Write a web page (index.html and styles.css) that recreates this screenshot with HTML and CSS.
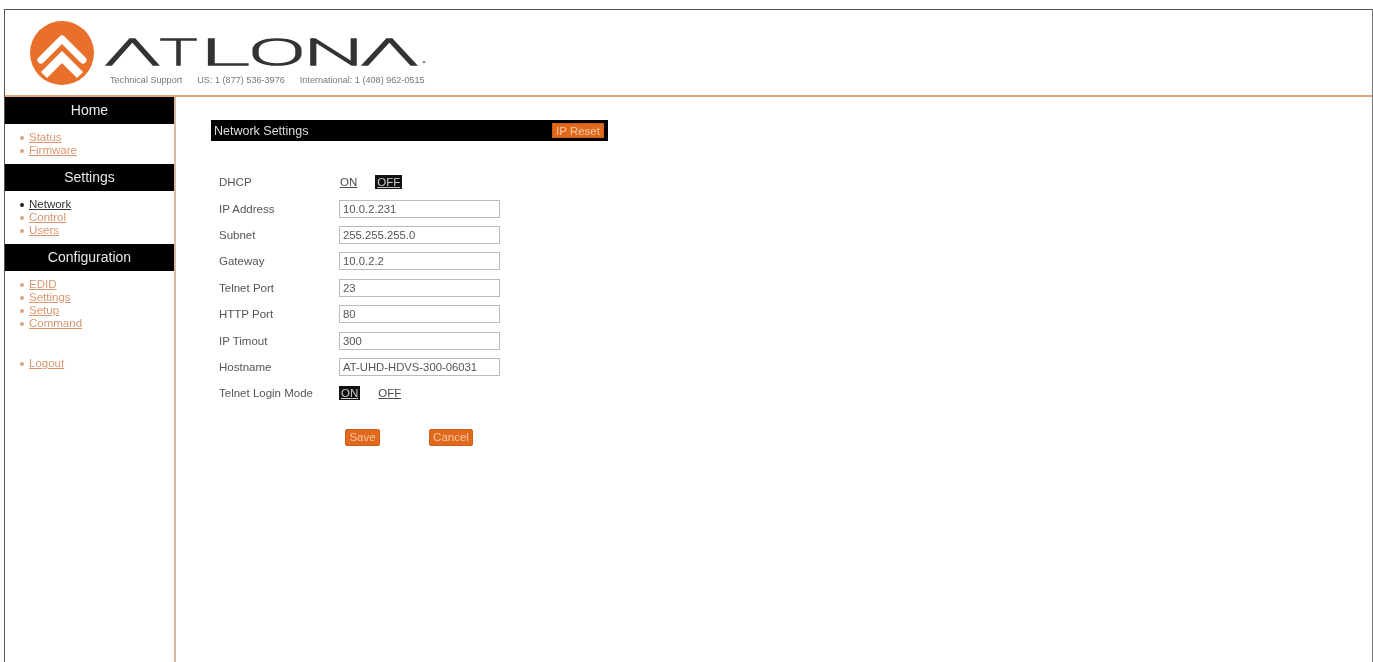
FILE: index.html
```html
<!DOCTYPE html>
<html lang="en">
<head>
    <meta charset="UTF-8">
    <meta name="viewport" content="width=device-width, initial-scale=1.0">
    <title>Network Settings</title>
    <link rel="stylesheet" href="styles.css">
</head>
<body>

    <div class="frame">
        <div class="header">
            <svg class="emblem" width="64" height="64" viewBox="0 0 64 64">
                <circle cx="32" cy="32" r="32" fill="#e8702a"/>
                <path d="M11 39 L32 18 L53 39" fill="none" stroke="#fff" stroke-width="7" stroke-linecap="round" stroke-linejoin="round"/>
                <path d="M14 54 L32 36 L50 54" fill="none" stroke="#fff" stroke-width="8.5" stroke-linejoin="miter"/>
            </svg>
            <div class="brand">
                <svg class="wordmark" width="327" height="52" viewBox="0 0 327 52" role="img" aria-label="ATLONA">
                    <text class="wordmark-text" y="42"><tspan x="0" textLength="57" lengthAdjust="spacingAndGlyphs">Λ</tspan><tspan x="56" textLength="37" lengthAdjust="spacingAndGlyphs">T</tspan><tspan x="97" textLength="48" lengthAdjust="spacingAndGlyphs">L</tspan><tspan x="145" textLength="56" lengthAdjust="spacingAndGlyphs">O</tspan><tspan x="200" textLength="59" lengthAdjust="spacingAndGlyphs">N</tspan><tspan x="256" textLength="59" lengthAdjust="spacingAndGlyphs">Λ</tspan></text>
                    <circle cx="320" cy="39" r="1.3" fill="#888"/>
                </svg>
                <div class="support">
                    <span>Technical Support</span>
                    <span>US: 1 (877) 536-3976</span>
                    <span>International: 1 (408) 962-0515</span>
                </div>
            </div>
        </div>

        <div class="main">
            <div class="sidebar">
                <div class="side-title">Home</div>
                <ul class="side-list">
                    <li><a href="#">Status</a></li>
                    <li><a href="#">Firmware</a></li>
                </ul>
                <div class="side-title">Settings</div>
                <ul class="side-list">
                    <li class="current"><a href="#">Network</a></li>
                    <li><a href="#">Control</a></li>
                    <li><a href="#">Users</a></li>
                </ul>
                <div class="side-title">Configuration</div>
                <ul class="side-list">
                    <li><a href="#">EDID</a></li>
                    <li><a href="#">Settings</a></li>
                    <li><a href="#">Setup</a></li>
                    <li><a href="#">Command</a></li>
                </ul>
                <ul class="side-list logout">
                    <li><a href="#">Logout</a></li>
                </ul>
            </div>

            <div class="content">
                <div class="panel-title">
                    <span>Network Settings</span>
                    <button class="btn reset">IP Reset</button>
                </div>

                <div class="form">
                    <div class="label">DHCP</div>
                    <div class="toggle"><a href="#">ON</a><a href="#" class="active">OFF</a></div>

                    <div class="label">IP Address</div>
                    <input class="field" value="10.0.2.231">

                    <div class="label">Subnet</div>
                    <input class="field" value="255.255.255.0">

                    <div class="label">Gateway</div>
                    <input class="field" value="10.0.2.2">

                    <div class="label">Telnet Port</div>
                    <input class="field" value="23">

                    <div class="label">HTTP Port</div>
                    <input class="field" value="80">

                    <div class="label">IP Timout</div>
                    <input class="field" value="300">

                    <div class="label">Hostname</div>
                    <input class="field" value="AT-UHD-HDVS-300-06031">

                    <div class="label">Telnet Login Mode</div>
                    <div class="toggle login"><a href="#" class="active">ON</a><a href="#">OFF</a></div>
                </div>

                <div class="actions">
                    <button class="btn">Save</button>
                    <button class="btn">Cancel</button>
                </div>
            </div>
        </div>
    </div>

</body>
</html>
```

FILE: styles.css
```css
html, body {
    height: 100%;
}

body {
    margin: 0;
    padding: 9px 0 0 4px;
    box-sizing: border-box;
    background-color: #fff;
    font-family: "Liberation Sans", Arial, sans-serif;
    font-size: 11.5px;
    color: #555;
    overflow: hidden;
}

.frame {
    height: 100%;
    border-top: 1px solid #555;
    border-left: 1px solid #555;
    border-right: 1px solid #777;
    box-sizing: border-box;
    display: flex;
    flex-direction: column;
    filter: blur(0.7px);
}

.header {
    height: 85px;
    flex: none;
    display: flex;
    padding: 11px 0 0 25px;
    box-sizing: border-box;
}

.emblem {
    flex: none;
}

.brand {
    margin-left: 12px;
}

.wordmark {
    display: block;
    margin: 2px 0 0 -2px;
}

.wordmark-text {
    font-family: Roboto, "Liberation Sans", sans-serif;
    font-size: 36px;
    font-weight: 100;
    fill: #333;
    stroke: #333;
    stroke-width: 1.7px;
}

.support {
    display: flex;
    gap: 15px;
    margin: 0 0 0 4px;
    font-size: 9.1px;
    line-height: 10px;
    color: #777;
    white-space: nowrap;
}

.main {
    flex: 1;
    display: flex;
    border-top: 2px solid #dfa67c;
}

.sidebar {
    width: 169px;
    flex: none;
    border-right: 2px solid #d8b8a0;
}

.side-title {
    height: 27px;
    line-height: 26px;
    background-color: #000;
    color: #e8e8e8;
    text-align: center;
    font-size: 14px;
}

.side-list {
    list-style: none;
    margin: 0;
    padding: 7px 0 7px 24px;
    line-height: 13px;
}

.side-list li {
    position: relative;
}

.side-list li::before {
    content: "";
    position: absolute;
    left: -9px;
    top: 5px;
    width: 4px;
    height: 4px;
    border-radius: 50%;
    background-color: #dba47e;
}

.side-list a {
    color: #d9966e;
}

.side-list .current::before {
    background-color: #222;
}

.side-list .current a {
    color: #333;
}

.logout {
    padding-top: 20px;
}

.content {
    flex: 1;
    padding: 23px 0 0 35px;
}

.panel-title {
    width: 397px;
    height: 21px;
    display: flex;
    align-items: center;
    justify-content: space-between;
    padding: 0 4px 0 3px;
    box-sizing: border-box;
    background-color: #000;
    color: #ddd;
    font-size: 12.5px;
}

.btn {
    border: 1px solid #c9601c;
    border-radius: 2px;
    background-color: #e2691b;
    color: #f3c9a5;
    font-family: inherit;
    font-size: 11.5px;
    padding: 0;
    height: 17px;
}

.reset {
    width: 52px;
    height: 15px;
    border-radius: 0;
}

.form {
    display: grid;
    grid-template-columns: 120px 161px;
    grid-auto-rows: 26.4px;
    align-items: center;
    margin: 28px 0 0 8px;
}

.field {
    height: 18px;
    width: 161px;
    box-sizing: border-box;
    border: 1px solid #bbb;
    padding: 0 3px;
    font-family: inherit;
    font-size: 11.3px;
    color: #555;
    outline: none;
}

.toggle {
    display: flex;
    gap: 17px;
}

.toggle a {
    color: #4a4a4a;
    padding: 0 1px;
    line-height: 14px;
}

.toggle .active {
    background-color: #111;
    color: #ccc;
    padding: 0 2px;
}

.actions {
    display: flex;
    gap: 49px;
    margin: 22px 0 0 134px;
}

.actions .btn:first-child {
    width: 35px;
}

.actions .btn:last-child {
    width: 44px;
}
```
